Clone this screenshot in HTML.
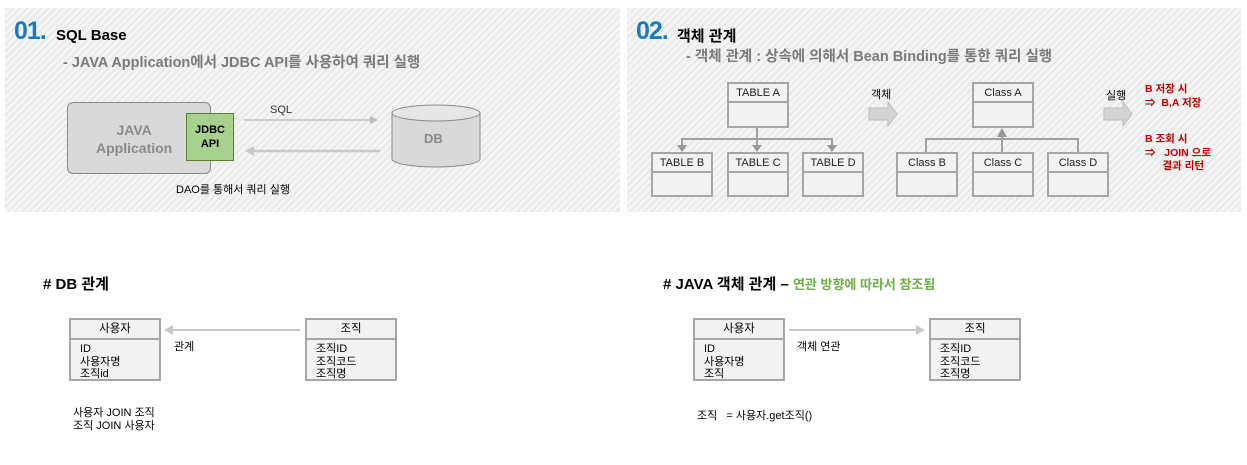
<!DOCTYPE html>
<html><head><meta charset="utf-8"><style>
*{margin:0;padding:0;box-sizing:border-box}
body{width:1247px;height:465px;background:#fff;position:relative;overflow:hidden;font-family:"Liberation Sans","Noto Sans CJK KR",sans-serif;color:#000}
.a{position:absolute;white-space:nowrap}
.panel{position:absolute;top:8px;height:204px;background:repeating-linear-gradient(135deg,#e9e9e9 0 2px,#f5f5f5 2px 5px)}
.num{font-weight:bold;color:#1a7abf;font-size:25px;letter-spacing:-1px}
.ttl{font-weight:bold;font-size:15px}
.sub{font-weight:bold;color:#7a7a7a;font-size:14.5px}
.box{position:absolute;border:2px solid #a6a6a6;background:#f2f2f2}
.box .h{height:19px;border-bottom:2px solid #a6a6a6;text-align:center;font-size:11px;line-height:19px;color:#222}
.ub{position:absolute;border:2px solid #a6a6a6;background:#f2f2f2}
.ub .h{height:20px;border-bottom:2px solid #a6a6a6;text-align:center;font-size:11.5px;line-height:19px}
.ub .b{padding:3px 0 0 9px;font-size:11px;line-height:12.5px}
.red{color:#c00000;font-weight:bold;font-size:10.5px}
.sm{font-size:11px}
</style></head><body>
<div class="panel" style="left:5px;width:615px"></div>
<div class="panel" style="left:627px;width:614px"></div>

<div class="a num" style="left:14px;top:17px">01.</div>
<div class="a ttl" style="left:56px;top:27px">SQL Base</div>
<div class="a sub" style="left:63px;top:51px">- JAVA Application에서 JDBC API를 사용하여 쿼리 실행</div>
<div class="a" style="left:67px;top:102px;width:144px;height:72px;background:#d9d9d9;border:1px solid #8a8a8a;border-radius:6px"></div>
<div class="a" style="left:96px;top:121px;color:#8a8a8a;font-weight:bold;font-size:14px;text-align:center;line-height:18px">JAVA<br>Application</div>
<div class="a" style="left:186px;top:113px;width:48px;height:48px;background:#a9d18e;border:1px solid #548235;text-align:center;font-weight:bold;font-size:11px;line-height:14px;padding-top:9px">JDBC<br>API</div>
<div class="a sm" style="left:270px;top:104px;color:#333">SQL</div>
<svg class="a" style="left:0;top:0" width="620" height="212">
<line x1="244" y1="120" x2="370" y2="120" stroke="#c0c0c0" stroke-width="1.5"/><polygon points="378,120 370,116 370,124" fill="#bbb"/>
<line x1="252" y1="151" x2="380" y2="151" stroke="#c8c8c8" stroke-width="2.5"/><polygon points="245,151 254,146 254,156" fill="#c8c8c8"/>
<path d="M392 113 V159 A44 8 0 0 0 480 159 V113" fill="#d9d9d9" stroke="#8a8a8a"/>
<ellipse cx="436" cy="113" rx="44" ry="8" fill="#e6e6e6" stroke="#8a8a8a"/>
</svg>
<div class="a" style="left:424px;top:131px;color:#8a8a8a;font-weight:bold;font-size:13px">DB</div>
<div class="a sm" style="left:176px;top:181px">DAO를 통해서 쿼리 실행</div>

<div class="a num" style="left:636px;top:17px">02.</div>
<div class="a ttl" style="left:677px;top:25px">객체 관계</div>
<div class="a sub" style="left:686px;top:45px">- 객체 관계 : 상속에 의해서 Bean Binding를 통한 쿼리 실행</div>
<svg class="a" style="left:0;top:0" width="1247" height="212">
<g stroke="#a0a0a0" stroke-width="2" fill="none"><path d="M757 127V139M682 147V139H832V147M757 139V147"/>
<path d="M1002 136V168M926 152V139H1078V152"/></g>
<g fill="#999"><polygon points="682,152 677,145 687,145"/><polygon points="757,152 752,145 762,145"/><polygon points="832,152 827,145 837,145"/><polygon points="1002,128 997,137 1007,137"/></g>
<polygon points="869,108 888,108 888,102 897,114 888,126 888,120 869,120" fill="#d4d4d4" stroke="#bcbcbc"/>
<polygon points="1104,108 1123,108 1123,102 1132,114 1123,126 1123,120 1104,120" fill="#d4d4d4" stroke="#bcbcbc"/>
</svg>
<div class="box" style="left:727px;top:82px;width:62px;height:46px"><div class="h">TABLE A</div></div>
<div class="box" style="left:651px;top:152px;width:62px;height:45px"><div class="h">TABLE B</div></div>
<div class="box" style="left:727px;top:152px;width:62px;height:45px"><div class="h">TABLE C</div></div>
<div class="box" style="left:802px;top:152px;width:62px;height:45px"><div class="h">TABLE D</div></div>
<div class="a sm" style="left:871px;top:86px">객체</div>
<div class="box" style="left:972px;top:82px;width:62px;height:46px"><div class="h">Class A</div></div>
<div class="box" style="left:896px;top:152px;width:62px;height:45px"><div class="h">Class B</div></div>
<div class="box" style="left:972px;top:152px;width:62px;height:45px"><div class="h">Class C</div></div>
<div class="box" style="left:1047px;top:152px;width:62px;height:45px"><div class="h">Class D</div></div>
<div class="a sm" style="left:1106px;top:87px">실행</div>
<div class="a red" style="left:1145px;top:82px;line-height:14px">B 저장 시<br>⇒&nbsp;&nbsp;B,A 저장</div>
<div class="a red" style="left:1145px;top:133px;line-height:13.5px">B 조회 시<br>⇒&nbsp;&nbsp;&nbsp;JOIN 으로<br>&nbsp;&nbsp;&nbsp;&nbsp;&nbsp;&nbsp;결과 리턴</div>

<div class="a ttl" style="left:43px;top:273px">#&nbsp;DB 관계</div>
<div class="ub" style="left:69px;top:318px;width:92px;height:63px"><div class="h">사용자</div><div class="b">ID<br>사용자명<br>조직id</div></div>
<div class="ub" style="left:305px;top:318px;width:92px;height:63px"><div class="h">조직</div><div class="b">조직ID<br>조직코드<br>조직명</div></div>
<svg class="a" style="left:160px;top:320px" width="145" height="20"><line x1="12" y1="10" x2="140" y2="10" stroke="#c8c8c8" stroke-width="2"/><polygon points="4,10 13,5 13,15" fill="#c8c8c8"/></svg>
<div class="a sm" style="left:174px;top:338px">관계</div>
<div class="a sm" style="left:73px;top:407px;line-height:13px">사용자 JOIN 조직<br>조직 JOIN 사용자</div>

<div class="a ttl" style="left:663px;top:273px">#&nbsp;JAVA 객체 관계 – <span style="color:#70ad47;font-size:13px">연관 방향에 따라서 참조됨</span></div>
<div class="ub" style="left:693px;top:318px;width:92px;height:63px"><div class="h">사용자</div><div class="b">ID<br>사용자명<br>조직</div></div>
<div class="ub" style="left:929px;top:318px;width:92px;height:63px"><div class="h">조직</div><div class="b">조직ID<br>조직코드<br>조직명</div></div>
<svg class="a" style="left:785px;top:320px" width="145" height="20"><line x1="4" y1="10" x2="132" y2="10" stroke="#c8c8c8" stroke-width="2"/><polygon points="140,10 131,5 131,15" fill="#c8c8c8"/></svg>
<div class="a sm" style="left:797px;top:338px">객체 연관</div>
<div class="a sm" style="left:697px;top:407px">조직 &nbsp;&nbsp;= 사용자.get조직()</div>
</body></html>
